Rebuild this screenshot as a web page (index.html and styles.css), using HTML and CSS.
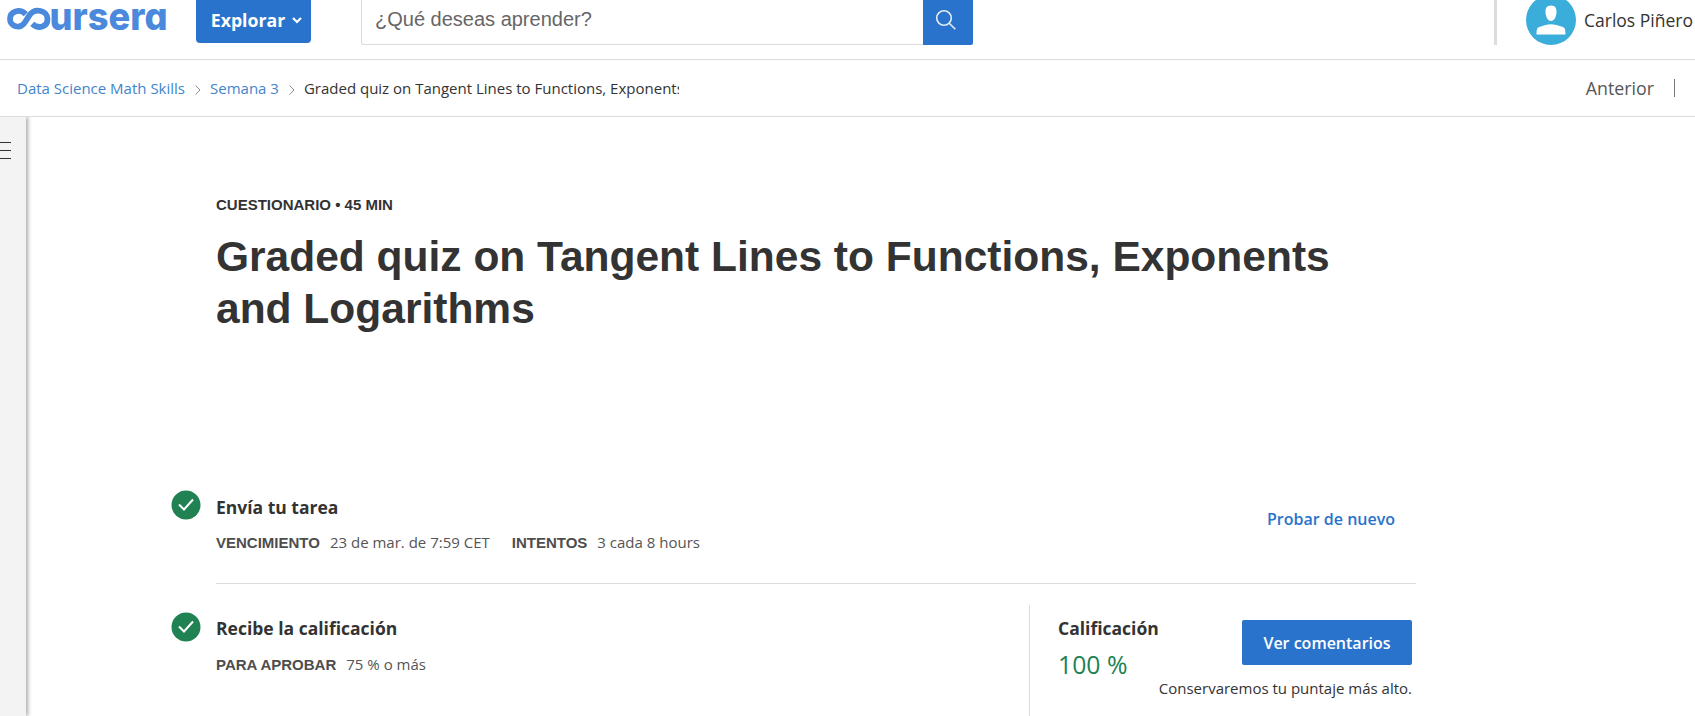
FILE: index.html
```html
<!DOCTYPE html>
<html lang="es">
<head>
<meta charset="utf-8">
<title>Coursera</title>
<link rel="stylesheet" href="styles.css">
</head>
<body>
<header class="topbar">
  <svg class="logo" width="162" height="40" viewBox="0 0 162 40" aria-label="coursera">
    <path class="logo-loop" d="M20.800 14.200C14.500 8 5 11.500 5 19C5 26.500 15 29.800 19.800 22.500L24.500 15.200C30 7.500 42.500 10.500 42.500 19C42.500 27 33.500 29.500 27.200 23.800"/>
    <text class="logo-text" x="44.500" y="29.500" textLength="118" lengthAdjust="spacingAndGlyphs">ursera</text>
  </svg>
  <button class="explore">Explorar
    <svg width="10" height="7" viewBox="0 0 10 7"><path d="M1 1l4 4 4-4" fill="none" stroke="#fff" stroke-width="2.200"/></svg>
  </button>
  <div class="search">
    <div class="search-input">¿Qué deseas aprender?</div>
    <button class="search-button"><svg width="22" height="22" viewBox="0 0 22 22"><g fill="none" stroke="#e3ebf5" stroke-width="1.600"><circle cx="9" cy="9" r="7.300"/><path d="M14 14l6.300 6.300"/></g></svg></button>
  </div>
  <div class="user">
    <svg class="avatar" width="50" height="50" viewBox="0 0 50 50"><circle cx="25" cy="25" r="25" fill="#3badda"/><path fill="#fff" d="M25 10.500c4 0 5.700 2.800 5.500 6.500-.2 4.500-2 9-5.500 9s-5.300-4.500-5.500-9c-.2-3.700 1.500-6.500 5.500-6.500zM10.500 39.500c0-6 .8-7 3.500-7.800C18.500 30.500 21 29.300 25 29.300s6.500 1.200 11 2.400c2.700.8 3.500 1.800 3.500 7.800z"/></svg>
    <span>Carlos Piñero</span>
  </div>
</header>
<nav class="crumbs">
  <a>Data Science Math Skills</a>
  <svg width="6" height="10" viewBox="0 0 6 10"><path d="M.7.500L5 5 .7 9.500"/></svg>
  <a>Semana 3</a>
  <svg width="6" height="10" viewBox="0 0 6 10"><path d="M.7.500L5 5 .7 9.500"/></svg>
  <span class="current">Graded quiz on Tangent Lines to Functions, Exponents</span>
  <span class="previous">Anterior</span>
</nav>
<div class="body">
  <aside class="rail"><div class="menu"></div></aside>
  <main class="content">
    <div class="kind">CUESTIONARIO • 45 MIN</div>
    <h1>Graded quiz on Tangent Lines to Functions, Exponents and Logarithms</h1>
    <section class="step submit">
      <svg class="check" width="30" height="30" viewBox="0 0 30 30"><circle cx="15" cy="15" r="14.500" fill="#208253"/><path d="M8 14.500l5 5 9-10" fill="none" stroke="#fff" stroke-width="2"/></svg>
      <div class="info">
        <h2>Envía tu tarea</h2>
        <p><b>VENCIMIENTO</b><span class="date">23 de mar. de 7:59 CET</span><b>INTENTOS</b><span>3 cada 8 hours</span></p>
      </div>
      <a class="retry">Probar de nuevo</a>
    </section>
    <section class="step grade">
      <svg class="check" width="30" height="30" viewBox="0 0 30 30"><circle cx="15" cy="15" r="14.500" fill="#208253"/><path d="M8 14.500l5 5 9-10" fill="none" stroke="#fff" stroke-width="2"/></svg>
      <div class="info">
        <h2>Recibe la calificación</h2>
        <p><b>PARA APROBAR</b><span>75 % o más</span></p>
      </div>
      <div class="result">
        <div class="result-row">
          <div><h2>Calificación</h2><div class="score">100 %</div></div>
          <button class="feedback">Ver comentarios</button>
        </div>
        <div class="note">Conservaremos tu puntaje más alto.</div>
      </div>
    </section>
  </main>
</div>
</body>
</html>
```
FILE: styles.css
```css
* { box-sizing: border-box; }
body { margin: 0; height: 716px; overflow: hidden; background: #fff; color: #333; font-family: "Open Sans", sans-serif; display: flex; flex-direction: column; white-space: nowrap; }
h1, h2, p { margin: 0; }
button { border: 0; padding: 0; color: #fff; background: #2a73cc; font-family: inherit; font-weight: 600; }
svg { display: block; flex: none; }
.topbar { height: 60px; flex: none; display: flex; align-items: flex-start; padding-left: 5px; border-bottom: 1px solid #dcdcdc; }
.logo { overflow: visible; }
.logo-loop { fill: none; stroke: #4a89dc; stroke-width: 5.800; }
.logo-text { fill: #4a89dc; font: 800 38.500px Inter, sans-serif; font-feature-settings: "cv11"; }
.explore { margin-left: 29px; width: 115px; height: 43px; border-radius: 0 0 4px 4px; font-size: 17.700px; font-weight: 700; display: flex; align-items: center; justify-content: center; gap: 7px; padding-bottom: 3px; padding-left: 6px; }
.search { margin-left: 50px; display: flex; height: 45px; width: 612px; }
.search-input { flex: 1; border: solid #dcdcdc; border-width: 0 0 1px 1px; border-radius: 0 0 0 3px; padding: 7px 0 0 13px; font: 20px/24px "Liberation Sans", sans-serif; color: #666; }
.search-button { width: 50px; border-radius: 0 0 2px 0; padding: 9px 0 0 12px; display: flex; align-items: flex-start; }
.user { margin-left: 521px; height: 45px; border-left: 3px solid #dcdcdc; padding-left: 29px; display: flex; align-items: flex-start; font-size: 17.500px; line-height: 40px; gap: 8px; }
.avatar { margin-top: -5px; }
.crumbs { height: 57px; flex: none; display: flex; align-items: center; border-bottom: 1px solid #dcdcdc; padding-left: 17px; font-size: 15px; }
.crumbs a { color: #4285cd; }
.crumbs svg { margin: 3px 9px 0 10px; fill: none; stroke: #888; }
.current { width: 375px; overflow: hidden; }
.previous { margin-left: auto; margin-right: 20px; font-size: 17.800px; color: #555; padding-right: 20px; border-right: 1px solid #777; line-height: 18px; }
.body { flex: 1; display: flex; min-height: 0; overflow: hidden; }
.rail { width: 26px; background: #f3f3f3; box-shadow: 2px 0 4px #aaa; padding-top: 25px; }
.menu { width: 11px; height: 17px; border: solid #333; border-width: 1px 0; background: linear-gradient(#333, #333) 0 7px / 100% 1px no-repeat; }
.content { margin-left: 145px; width: 1245px; padding-top: 79px; }
.kind { margin-left: 45px; font: bold 15px/18px "Liberation Sans", sans-serif; }
h1 { margin: 17px 0 0 45px; width: 1150px; font: bold 42.500px/52px "Liberation Sans", sans-serif; white-space: normal; }
.step { display: flex; align-items: flex-start; }
.submit { position: relative; margin-top: 155px; height: 99px; }
.submit::after { content: ""; position: absolute; left: 45px; right: 0; bottom: 5px; height: 1px; background: #dcdcdc; }
.info { margin-left: 15px; }
h2 { font-size: 17.500px; line-height: 24px; font-weight: 700; }
.info p { margin-top: 12px; font-size: 15px; line-height: 22px; color: #555; display: flex; }
.info b { font: bold 15px/23px "Liberation Sans", sans-serif; color: #4d4d4d; margin-right: 10px; }
.date { margin-right: 22px; }
.submit .info { margin-top: 5px; }
.retry { margin: 17px 21px 0 auto; color: #2a73cc; font-size: 16px; line-height: 24px; font-weight: 600; }
.grade .check { margin-top: 23px; }
.grade .info { margin-top: 27px; }
.grade .info p { margin-top: 13px; }
.result { margin: 16px 0 0 auto; width: 387px; height: 120px; border-left: 1px solid #dcdcdc; padding: 15px 4px 0 28px; }
.result-row { display: flex; justify-content: space-between; height: 58px; }
.result h2 { margin-top: -4px; }
.score { font-size: 24.800px; line-height: 32px; margin-top: 8px; color: #208253; }
.feedback { width: 170px; height: 45px; border-radius: 2px; font-size: 16px; }
.note { text-align: right; font-size: 15px; line-height: 20px; }
```
